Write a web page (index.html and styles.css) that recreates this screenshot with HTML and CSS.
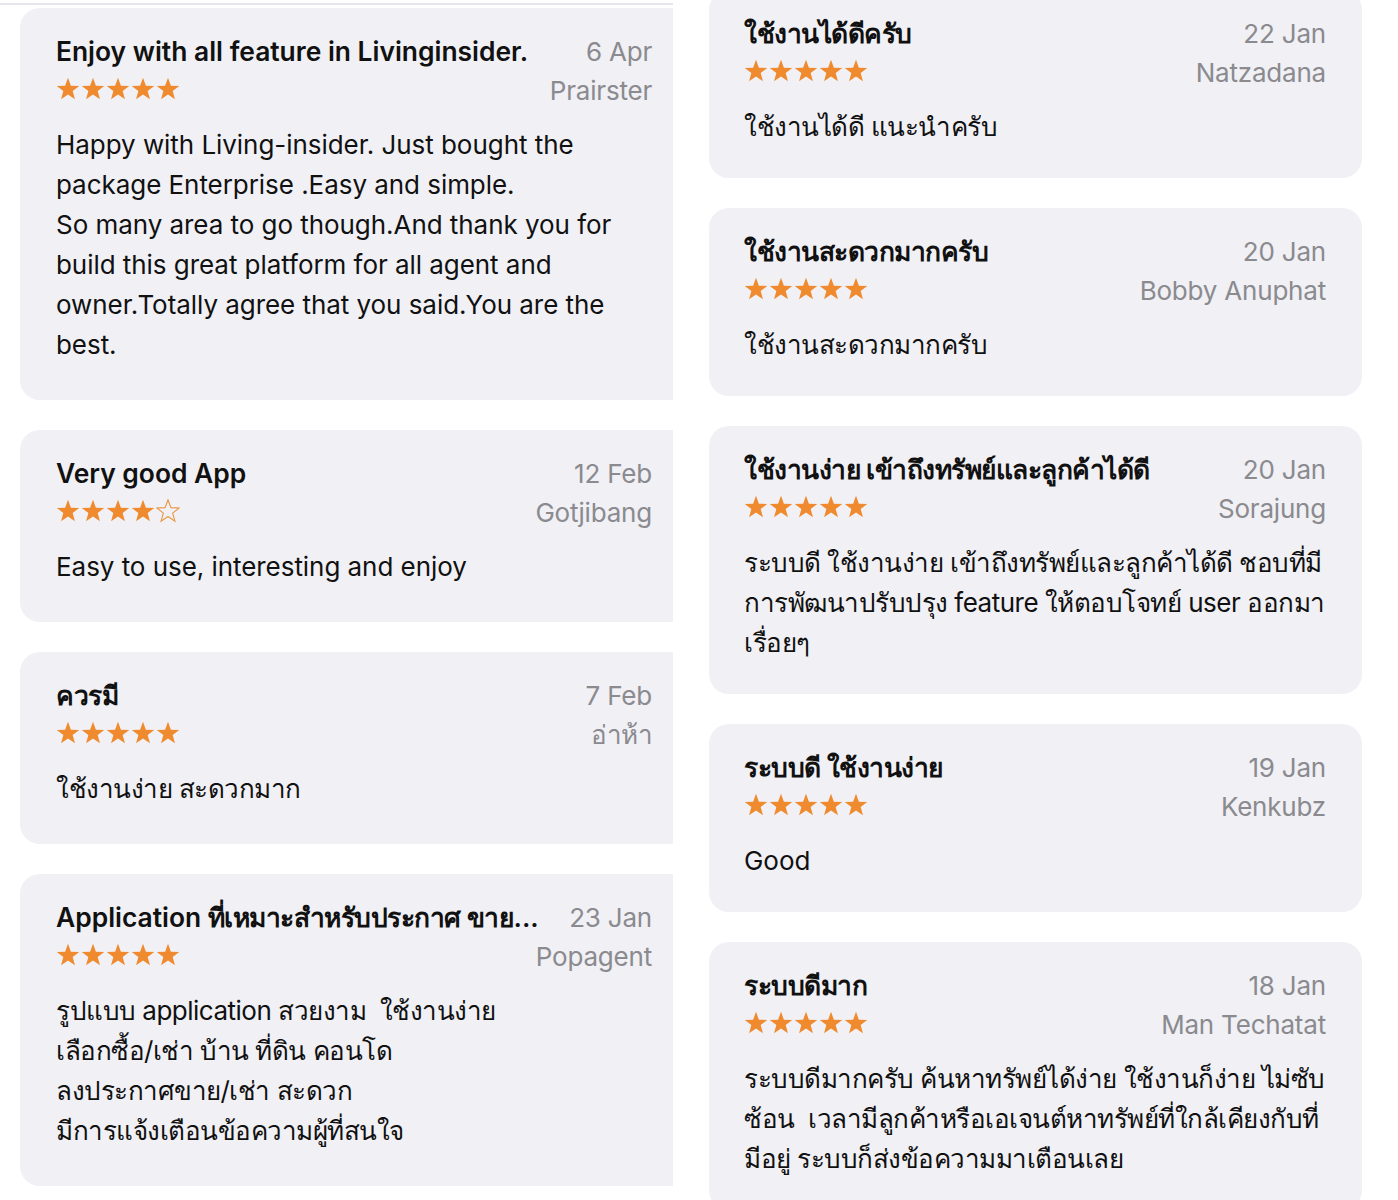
FILE: index.html
```html
<!DOCTYPE html>
<html lang="th">
<head>
<meta charset="utf-8">
<title>Reviews</title>
<link rel="stylesheet" href="styles.css">
</head>
<body>
<svg class="defs" width="0" height="0" aria-hidden="true">
  <defs>
    <symbol id="star" viewBox="0 0 24 24">
      <polygon points="12,0.8 14.88,8.64 23.22,8.95 16.66,14.11 18.94,22.15 12,17.5 5.06,22.15 7.34,14.11 0.78,8.95 9.12,8.64"/>
    </symbol>
  </defs>
</svg>
<main class="page">
  <section class="col col-left">
    <article class="card card-cut">
      <div class="head">
        <h3 class="title">Enjoy with all feature in Livinginsider.</h3>
        <span class="date">6 Apr</span>
        <div class="stars"><svg class="s"><use href="#star"/></svg><svg class="s"><use href="#star"/></svg><svg class="s"><use href="#star"/></svg><svg class="s"><use href="#star"/></svg><svg class="s"><use href="#star"/></svg></div>
        <span class="author">Prairster</span>
      </div>
      <p class="body">Happy with Living-insider. Just bought the<br>package Enterprise .Easy and simple.<br>So many area to go though.And thank you for<br>build this great platform for all agent and<br>owner.Totally agree that you said.You are the<br>best.</p>
    </article>
    <article class="card card-cut">
      <div class="head">
        <h3 class="title">Very good App</h3>
        <span class="date">12 Feb</span>
        <div class="stars"><svg class="s"><use href="#star"/></svg><svg class="s"><use href="#star"/></svg><svg class="s"><use href="#star"/></svg><svg class="s"><use href="#star"/></svg><svg class="s empty"><use href="#star"/></svg></div>
        <span class="author">Gotjibang</span>
      </div>
      <p class="body">Easy to use, interesting and enjoy</p>
    </article>
    <article class="card card-cut">
      <div class="head">
        <h3 class="title th">ควรมี</h3>
        <span class="date">7 Feb</span>
        <div class="stars"><svg class="s"><use href="#star"/></svg><svg class="s"><use href="#star"/></svg><svg class="s"><use href="#star"/></svg><svg class="s"><use href="#star"/></svg><svg class="s"><use href="#star"/></svg></div>
        <span class="author th">อ่าห้า</span>
      </div>
      <p class="body th">ใช้งานง่าย สะดวกมาก</p>
    </article>
    <article class="card card-cut">
      <div class="head">
        <h3 class="title">Application <span class="th">ที่เหมาะสำหรับประกาศ ขาย</span>...</h3>
        <span class="date">23 Jan</span>
        <div class="stars"><svg class="s"><use href="#star"/></svg><svg class="s"><use href="#star"/></svg><svg class="s"><use href="#star"/></svg><svg class="s"><use href="#star"/></svg><svg class="s"><use href="#star"/></svg></div>
        <span class="author">Popagent</span>
      </div>
      <p class="body th">รูปแบบ application สวยงาม&nbsp; ใช้งานง่าย<br>เลือกซื้อ/เช่า บ้าน ที่ดิน คอนโด<br>ลงประกาศขาย/เช่า สะดวก<br>มีการแจ้งเตือนข้อความผู้ที่สนใจ</p>
    </article>
  </section>

  <section class="col col-right">
    <article class="card">
      <div class="head">
        <h3 class="title th">ใช้งานได้ดีครับ</h3>
        <span class="date">22 Jan</span>
        <div class="stars"><svg class="s"><use href="#star"/></svg><svg class="s"><use href="#star"/></svg><svg class="s"><use href="#star"/></svg><svg class="s"><use href="#star"/></svg><svg class="s"><use href="#star"/></svg></div>
        <span class="author">Natzadana</span>
      </div>
      <p class="body th">ใช้งานได้ดี แนะนำครับ</p>
    </article>
    <article class="card">
      <div class="head">
        <h3 class="title th">ใช้งานสะดวกมากครับ</h3>
        <span class="date">20 Jan</span>
        <div class="stars"><svg class="s"><use href="#star"/></svg><svg class="s"><use href="#star"/></svg><svg class="s"><use href="#star"/></svg><svg class="s"><use href="#star"/></svg><svg class="s"><use href="#star"/></svg></div>
        <span class="author">Bobby Anuphat</span>
      </div>
      <p class="body th">ใช้งานสะดวกมากครับ</p>
    </article>
    <article class="card">
      <div class="head">
        <h3 class="title th">ใช้งานง่าย เข้าถึงทรัพย์และลูกค้าได้ดี</h3>
        <span class="date">20 Jan</span>
        <div class="stars"><svg class="s"><use href="#star"/></svg><svg class="s"><use href="#star"/></svg><svg class="s"><use href="#star"/></svg><svg class="s"><use href="#star"/></svg><svg class="s"><use href="#star"/></svg></div>
        <span class="author">Sorajung</span>
      </div>
      <p class="body th">ระบบดี ใช้งานง่าย เข้าถึงทรัพย์และลูกค้าได้ดี ชอบที่มี<br>การพัฒนาปรับปรุง feature ให้ตอบโจทย์ user ออกมา<br>เรื่อยๆ</p>
    </article>
    <article class="card">
      <div class="head">
        <h3 class="title th">ระบบดี ใช้งานง่าย</h3>
        <span class="date">19 Jan</span>
        <div class="stars"><svg class="s"><use href="#star"/></svg><svg class="s"><use href="#star"/></svg><svg class="s"><use href="#star"/></svg><svg class="s"><use href="#star"/></svg><svg class="s"><use href="#star"/></svg></div>
        <span class="author">Kenkubz</span>
      </div>
      <p class="body">Good</p>
    </article>
    <article class="card">
      <div class="head">
        <h3 class="title th">ระบบดีมาก</h3>
        <span class="date">18 Jan</span>
        <div class="stars"><svg class="s"><use href="#star"/></svg><svg class="s"><use href="#star"/></svg><svg class="s"><use href="#star"/></svg><svg class="s"><use href="#star"/></svg><svg class="s"><use href="#star"/></svg></div>
        <span class="author">Man Techatat</span>
      </div>
      <p class="body th">ระบบดีมากครับ ค้นหาทรัพย์ได้ง่าย ใช้งานก็ง่าย ไม่ซับ<br>ซ้อน&nbsp; เวลามีลูกค้าหรือเอเจนต์หาทรัพย์ที่ใกล้เคียงกับที่<br>มีอยู่ ระบบก็ส่งข้อความมาเตือนเลย</p>
    </article>
  </section>
</main>
</body>
</html>
```

FILE: styles.css
```css
* { box-sizing: border-box; }

html, body {
  margin: 0;
  padding: 0;
  background: #ffffff;
}

body {
  font-family: Inter, "Noto Sans", "DejaVu Sans", sans-serif;
  color: #111111;
  height: 1200px;
  overflow: hidden;
}

.defs {
  position: absolute;
  width: 0;
  height: 0;
}

.page {
  display: flex;
  align-items: flex-start;
}

.col {
  display: flex;
  flex-direction: column;
  gap: 30px;
}

.col-left {
  width: 673px;
  margin-top: 3px;
  padding-top: 3px;
  padding-left: 20px;
  border-top: 2px solid #e6e6ea;
}

.col-right {
  width: 653px;
  margin-left: 36px;
  margin-top: -10px;
}

.card {
  background: #f0f0f5;
  border-radius: 20px;
  padding: 24px 36px 31px 35px;
}

.card-cut {
  border-radius: 20px 0 0 20px;
  padding: 24px 21px 35px 36px;
}

.head {
  display: grid;
  grid-template-columns: minmax(0, 1fr) auto;
  grid-template-rows: 39px 39px;
  align-items: center;
  column-gap: 12px;
}

.title {
  margin: 0;
  font-size: 26.4px;
  font-weight: 600;
  line-height: 39px;
  white-space: nowrap;
  letter-spacing: 0;
}

.date,
.author {
  justify-self: end;
  font-size: 26px;
  line-height: 39px;
  color: #8a8a8f;
  white-space: nowrap;
  letter-spacing: -0.2px;
}

.stars {
  display: flex;
  gap: 1px;
  align-items: center;
  height: 39px;
  padding-bottom: 3px;
}

.s {
  width: 24px;
  height: 24px;
  fill: #f08a2e;
}

.s.empty {
  fill: none;
  stroke: #e8963f;
  stroke-width: 1.1;
}

.body {
  margin: 15px 0 0;
  font-size: 26px;
  line-height: 40px;
  font-weight: 400;
  letter-spacing: -0.05px;
  white-space: nowrap;
}

.th {
  letter-spacing: -0.5px;
}
```
